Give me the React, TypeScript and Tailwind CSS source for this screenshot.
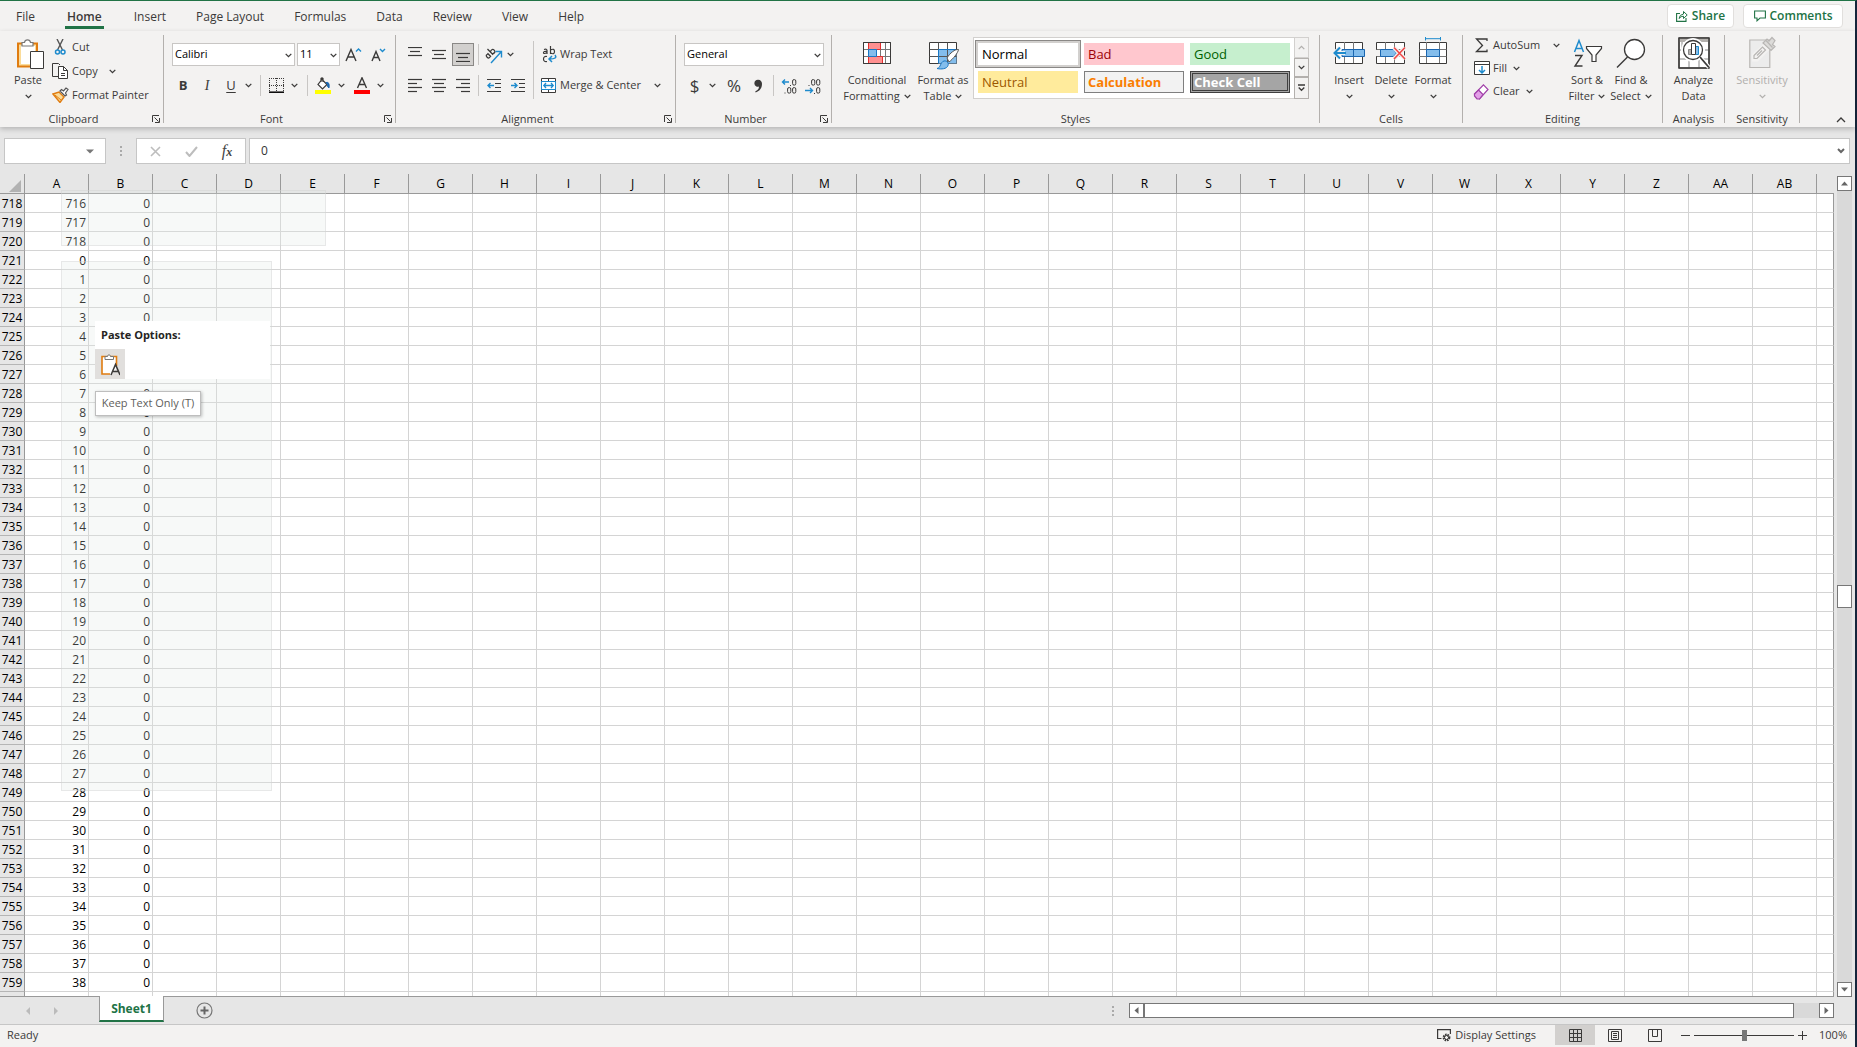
import type { ReactNode } from 'react'
import clsx from 'clsx'

const tabs = ['File', 'Home', 'Insert', 'Page Layout', 'Formulas', 'Data', 'Review', 'View', 'Help']

const columns = [...'ABCDEFGHIJKLMNOPQRSTUVWXYZ', 'AA', 'AB']

const rows = Array.from({ length: 42 }, (_, i) => {
   const row = 718 + i
   return { row, a: row < 721 ? row - 2 : row - 721, b: 0 }
})

const INK = '#3b3a39'
const BLUE = '#1e8bcd'

function Svg({ w, h, children, className }: { w: number; h: number; children: ReactNode; className?: string }) {
   return (
      <svg
         width={w}
         height={h}
         viewBox={`0 0 ${w} ${h}`}
         fill="none"
         stroke={INK}
         aria-hidden="true"
         className={clsx('shrink-0', className)}
      >
         {children}
      </svg>
   )
}

function Chevron({ color = INK, className }: { color?: string; className?: string }) {
   return (
      <Svg w={7} h={5} className={className}>
         <path d="M.7 .9 3.5 3.7 6.3 .9" stroke={color} strokeWidth="1.3" />
      </Svg>
   )
}

function Divider({ className }: { className?: string }) {
   return <div className={clsx('w-px shrink-0 bg-[#c8c6c4]', className)} />
}

function Group({
   label,
   width,
   launcher,
   children,
}: {
   label: string
   width: string
   launcher?: boolean
   children: ReactNode
}) {
   return (
      <>
         <section aria-label={label} className={clsx('flex shrink-0 flex-col', width)}>
            <div className="flex h-20 items-start">{children}</div>
            <div className={clsx('relative h-4 text-center leading-4', launcher && 'pr-4')}>
               {label}
               {launcher && (
                  <button aria-label={`${label} settings`} className="absolute right-[3px] top-1">
                     <Svg w={8} h={8}>
                        <path d="M.5 7V.5H7M2.5 2.5 6.5 6.5M7.5 3V7.5H3" />
                     </Svg>
                  </button>
               )}
            </div>
         </section>
         <div className="my-1 w-px shrink-0 bg-[#b3b0ad]" />
      </>
   )
}

function BigButton({
   icon,
   lines,
   width,
   arrow = true,
   disabled,
}: {
   icon: ReactNode
   lines: string[]
   width: string
   arrow?: boolean
   disabled?: boolean
}) {
   return (
      <button
         disabled={disabled}
         className={clsx('mt-1 flex shrink-0 flex-col items-center leading-4', width, disabled && 'text-[#b1afad]')}
      >
         {icon}
         <span className="whitespace-nowrap">{lines[0]}</span>
         <span className="flex h-4 items-center gap-1 whitespace-nowrap">
            {lines[1]}
            {arrow && <Chevron color={disabled ? '#b1afad' : INK} />}
         </span>
      </button>
   )
}

function SmallButton({ icon, label, arrow, arrowGap = 'ml-1' }: {
   icon: ReactNode
   label: string
   arrow?: boolean
   arrowGap?: string
}) {
   return (
      <button className="flex h-full items-center gap-[2px] whitespace-nowrap">
         {icon}
         {label}
         {arrow && <Chevron className={arrowGap} />}
      </button>
   )
}

function Tool({ label, width = 'w-[22px]', active, children }: {
   label: string
   width?: string
   active?: boolean
   children: ReactNode
}) {
   return (
      <button
         aria-label={label}
         className={clsx(
            'flex h-[23px] shrink-0 items-center justify-center',
            width,
            active && 'border border-[#8a8886] bg-[#d2d0ce]',
         )}
      >
         {children}
      </button>
   )
}

function Combo({ label, value, width }: { label: string; value: string; width: string }) {
   return (
      <div className={clsx('relative h-[23px]', width)}>
         <select
            aria-label={label}
            className="h-full w-full appearance-none border border-[#c8c6c4] bg-white px-[2px] text-[11px] text-black"
         >
            <option>{value}</option>
         </select>
         <Chevron className="pointer-events-none absolute right-[3px] top-[10px]" />
      </div>
   )
}

function Lines({ y, x1, x2 }: { y: number[]; x1: number[]; x2: number[] }) {
   return (
      <Svg w={14} h={15}>
         {y.map((v, i) => (
            <path key={v} d={`M${x1[i]} ${v}.5H${x2[i]}`} strokeWidth="1.2" />
         ))}
      </Svg>
   )
}

/* ---- large ribbon icons, all 37px high ---- */

const pasteIcon = (
   <Svg w={36} h={37}>
      <path d="M8 8.5h19v23H8z" fill="#fbdc9a" stroke="#e07c10" strokeWidth="2" />
      <path d="M11 11h14v18H11z" fill="#fff" stroke="none" />
      <path d="M12 11V7.5h2.5C15 4 20 4 20.500 7.500H23V11z" fill="#fff" stroke="#777" strokeWidth="1.2" />
      <path d="M20.500 16.500h13v17h-13z" fill="#fff" stroke={INK} />
   </Svg>
)

function TableLines() {
   return (
      <>
         <path d="M.5 .5h27v21H.500z" fill="#fff" />
         <path d="M.5 7.500h27M.5 14.500h27M5.500 0v21M17.500 0v21M22.500 0v21" stroke="#777" />
      </>
   )
}

const conditionalIcon = (
   <Svg w={28} h={37}>
      <g transform="translate(0 7)">
         <TableLines />
         <path d="M5.500 .5h12v7h-12zM5.500 14.500h14v7h-14z" fill="#ff9090" stroke="#e03030" />
         <path d="M5.500 7.500h8v7h-8z" fill="#83bdec" stroke="#1a77c4" />
         <path d="M.5 .5h27v21H.500z" />
      </g>
   </Svg>
)

const formatTableIcon = (
   <Svg w={30} h={37} className="ml-[2px]">
      <path d="M.5 7.500h27v21H.500z" fill="#fff" />
      <path d="M9.500 14.500h18v14h-18z" fill="#83bdec" stroke="none" />
      <path d="M.5 14.500h27M.5 21.500h27M9.500 7.500v21M18.500 7.500v21" stroke="#555" />
      <path d="M9.500 28.500v-14h18" stroke="#1a77c4" />
      <path d="M18 23C21 18 26 14 29.500 14.500 29 18 24 24 20 27z" fill="#fff" stroke="#555" />
      <path d="M8 33.500C12 33 11 27 15 26c3-.6 5 2 4 4.500-1 3.500-7 4-11 3z" fill="#83bdec" stroke="#1a77c4" />
   </Svg>
)

const insertIcon = (
   <Svg w={34} h={37}>
      <path d="M3.500 7.500h27v21h-27z" fill="#fff" />
      <path d="M12.500 7v21M21.500 7v21" stroke="#777" />
      <path d="M10 14.500h22.500v7H10z" fill="#83bdec" stroke="#1a66b0" />
      <path d="M21.500 15v6" stroke="#1a66b0" />
      <path d="M13 18H3M8 12.500 2.500 18 8 23.500" stroke="#f3f2f1" strokeWidth="4" />
      <path d="M14 18H2.500M8 12.500 2.500 18 8 23.500" stroke={BLUE} strokeWidth="2" />
   </Svg>
)

const deleteIcon = (
   <Svg w={32} h={37}>
      <path d="M1.500 7.500h28v21h-28z" fill="#fff" />
      <path d="M10.500 7v21M19.500 7v21M1.500 14.500h28M1.500 21.500h28" stroke="#777" />
      <path d="M1 15h5v6H1z" fill="#f3f2f1" stroke="none" />
      <path d="M5.500 14.500h13l3 3.500-3 3.500h-13z" fill="#83bdec" stroke="#1a66b0" />
      <path d="M19 12.500 30 24M30 12.500 19 24" stroke="#f3f2f1" strokeWidth="4" />
      <path d="M19 12.500 30 24M30 12.500 19 24" stroke="#f04848" strokeWidth="1.600" />
   </Svg>
)

const formatIcon = (
   <Svg w={28} h={37}>
      <path d="M.5 7.500h27v21H.500z" fill="#fff" />
      <path d="M7.500 7v21M20.500 7v21M.5 14.500h27M.5 21.500h27" stroke="#777" />
      <path d="M7.500 14.500h13v7h-13z" fill="#83bdec" stroke="#1a66b0" />
      <path d="M6.500 2v3.500M21.500 2v3.500M7 3.700h14" stroke={BLUE} />
   </Svg>
)

const sortIcon = (
   <Svg w={30} h={37} className="-mr-[2px]">
      <path d="M1.500 17 6 5.500 10.500 17M3 13.500h6" stroke={BLUE} strokeWidth="1.500" />
      <path d="M2 20.500h7L2 31h7.500" strokeWidth="1.400" />
      <path d="M13.500 11.500h15v2l-5.500 6.500v6.500h-4V20l-5.500-6.500z" fill="#fff" strokeWidth="1.200" />
   </Svg>
)

const findIcon = (
   <Svg w={30} h={37}>
      <circle cx="18.500" cy="14.500" r="10" fill="#fff" strokeWidth="1.300" />
      <path d="M11.500 22 1 32.500" strokeWidth="1.500" />
   </Svg>
)

const analyzeIcon = (
   <Svg w={32} h={37}>
      <path d="M1 3h30v30H1z" fill="#fff" />
      <path d="M1 3h30v4H1z" fill="#b3b0ad" stroke="none" />
      <path d="M1 15h30M1 24h30M11 24v9M21 24v9M4 7v8" stroke="#888" />
      <path d="M1 3h30v30H1z" strokeWidth="1.500" />
      <circle cx="15" cy="15" r="11.500" fill="#fff" stroke="#fff" />
      <circle cx="15" cy="15" r="9.500" fill="#fff" strokeWidth="1.300" />
      <path d="M22 22 31 32.500" stroke="#fff" strokeWidth="4" />
      <path d="M22 22 31 32.500" strokeWidth="1.800" />
      <path d="M10.500 14.500h3v5h-3z" fill="#b3b0ad" stroke="#888" />
      <path d="M17.500 11.500h3v8h-3z" fill="#83bdec" stroke={BLUE} />
      <path d="M13.500 8.500h4v11h-4z" fill="#fff" />
   </Svg>
)

const sensitivityIcon = (
   <Svg w={28} h={37} className="ml-[2px]">
      <g stroke="#b8b6b4" strokeWidth="1.200">
         <path d="M.8 5h20v27.500H.8z" fill="#ececec" />
         <path d="M5 20 15.500 11l3 3L8 24.500H5z" fill="#f3f2f1" stroke="#f3f2f1" strokeWidth="4" />
         <path d="M5 20.500 13.500 12l3 3L8 23.500H5z" fill="#f3f2f1" />
         <path d="M8 20.500 13 15.500" />
         <path d="m14 8 4-4 2 2 3-3.500 3 3-2.500 4 2.500 2-4 4z" fill="#dcdbd9" />
         <path d="m17 5.500 6.500 7" />
      </g>
   </Svg>
)

/* ---- style gallery ---- */

const styles = [
   { name: 'Normal', look: 'bg-white text-black outline outline-offset-2 outline-[#8a8886] ring-2 ring-[#d2d0ce]' },
   { name: 'Bad', look: 'bg-[#ffc7ce] text-[#9c0006]' },
   { name: 'Good', look: 'bg-[#c6efce] text-[#006100]' },
   { name: 'Neutral', look: 'bg-[#ffeb9c] text-[#9c5700]' },
   { name: 'Calculation', look: 'bg-[#f2f2f2] font-bold text-[#fa7d00] border border-[#7f7f7f]' },
   { name: 'Check Cell', look: 'bg-[#a5a5a5] font-bold text-white border-[3px] border-double border-[#3f3f3f]' },
]

function Ribbon() {
   return (
      <div className="relative z-10 flex h-24 shrink-0 bg-[#f3f2f1] shadow-[0_2px_5px_rgba(0,0,0,0.22)]">
         <Group label="Clipboard" width="w-[163px]" launcher>
            <BigButton icon={pasteIcon} lines={['Paste', '']} width="ml-[10px] w-9" />
            <div className="ml-[6px] mt-1 grid auto-rows-[24px]">
               <SmallButton
                  label="Cut"
                  icon={
                     <Svg w={18} h={16}>
                        <path d="M5 0 10.500 11M11 0 5.500 11" stroke="#555" strokeWidth="1.400" />
                        <circle cx="5.500" cy="13" r="2" stroke={BLUE} strokeWidth="1.500" />
                        <circle cx="11" cy="13" r="2" stroke={BLUE} strokeWidth="1.500" />
                     </Svg>
                  }
               />
               <SmallButton
                  label="Copy"
                  arrow
                  arrowGap="ml-[9px]"
                  icon={
                     <Svg w={18} h={16}>
                        <path d="M6 13.500H.500V.500h6L8 2" />
                        <path d="M6.500 3.500h5l4 4v8h-9z" fill="#fff" />
                        <path d="M11.500 3.500v4h4M9 10.500h4M9 12.500h4" />
                     </Svg>
                  }
               />
               <SmallButton
                  label="Format Painter"
                  icon={
                     <Svg w={18} h={16}>
                        <path d="M1 7 7 5l5 5-4 5.500z" fill="#fbdc9a" stroke="#e07c10" strokeWidth="1.400" />
                        <path d="m3 8 6 5" stroke="#e07c10" />
                        <path d="m8 4 1.500-1.500 2 1.500L14 1l2 1.500L13.500 6l1 2L13 9z" fill="#fff" stroke="#555" strokeWidth="1.200" />
                     </Svg>
                  }
               />
            </div>
         </Group>

         <Group label="Font" width="w-[231px]" launcher>
            <div className="pl-2 pt-3">
               <div className="flex gap-[2px]">
                  <Combo label="Font" value="Calibri" width="w-[123px]" />
                  <Combo label="Font size" value="11" width="w-[43px]" />
                  <Tool label="Increase font size">
                     <Svg w={17} h={16}>
                        <path d="M1 14 6 2.500 11 14M3 10h6.500" strokeWidth="1.400" />
                        <path d="m11 4.500 2.500-2.500L16 4.500" stroke={BLUE} strokeWidth="1.400" />
                     </Svg>
                  </Tool>
                  <Tool label="Decrease font size" width="w-6">
                     <Svg w={16} h={16}>
                        <path d="M2 14 6 4.500 10 14M3.500 10.500h5.500" strokeWidth="1.400" />
                        <path d="m10 2 2.500 2.500L15 2" stroke={BLUE} strokeWidth="1.400" />
                     </Svg>
                  </Tool>
               </div>
               <div className="mt-2 flex items-center text-[13px]">
                  <Tool label="Bold">
                     <b>B</b>
                  </Tool>
                  <Tool label="Italic" width="w-[26px]">
                     <i className="font-['Liberation_Serif',serif] text-[14px]">I</i>
                  </Tool>
                  <Tool label="Underline">
                     <span className="underline underline-offset-2">U</span>
                  </Tool>
                  <Tool label="Underline style" width="w-3">
                     <Chevron />
                  </Tool>
                  <Divider className="mx-[6px] h-[21px]" />
                  <Tool label="Borders" width="w-[19px]">
                     <Svg w={15} h={15}>
                        <path d="M.5 0v14M14.500 0v14M7.500 0v14M0 .5h15M0 7.500h15" strokeDasharray="1 1" />
                        <path d="M0 14.200h15" stroke="#000" strokeWidth="1.500" />
                     </Svg>
                  </Tool>
                  <Tool label="Border styles" width="w-[17px]">
                     <Chevron />
                  </Tool>
                  <Divider className="mx-1 h-[21px]" />
                  <Tool label="Fill color">
                     <Svg w={16} h={17}>
                        <path d="M7 2.500 12 7.500 7.500 12 3 7.500zM6 5V1.500q1-1 2 0V5" fill="#fff" strokeWidth="1.200" />
                        <path d="M11 5.500q4-1 3 5.500-2-1-1.500-3.500z" fill="#1a66b0" stroke="#1a66b0" />
                        <path d="M0 13h16v4H0z" fill="#ff0" stroke="none" />
                     </Svg>
                  </Tool>
                  <Tool label="Fill colors" width="w-[14px]">
                     <Chevron />
                  </Tool>
                  <Tool label="Font color" width="w-7">
                     <Svg w={16} h={17}>
                        <path d="M3.500 11 8 .8 12.500 11M5 7.500h6" strokeWidth="1.400" />
                        <path d="M0 13h16v4H0z" fill="#f00" stroke="none" />
                     </Svg>
                  </Tool>
                  <Tool label="Font colors" width="w-2">
                     <Chevron />
                  </Tool>
               </div>
            </div>
         </Group>

         <Group label="Alignment" width="w-[279px]" launcher>
            <div className="pl-2 pt-3">
               <div className="flex items-center gap-[2px]">
                  <Tool label="Top align">
                     <Lines y={[0, 4, 8]} x1={[0, 2, 0]} x2={[14, 12, 14]} />
                  </Tool>
                  <Tool label="Middle align">
                     <Lines y={[3, 7, 11]} x1={[0, 2, 0]} x2={[14, 12, 14]} />
                  </Tool>
                  <Tool label="Bottom align" active>
                     <Lines y={[6, 10, 14]} x1={[0, 2, 0]} x2={[14, 12, 14]} />
                  </Tool>
                  <Divider className="mx-[2px] h-[21px]" />
                  <Tool label="Orientation">
                     <Svg w={18} h={18}>
                        <g strokeWidth="1.300" transform="rotate(-45 6 8)">
                           <path d="M4 5v5M4 6q-3-1.500-3 1.500T4 9M7 2v8M7 6q4-1.500 4 1.500T7 9" />
                        </g>
                        <path d="M6 17 16 6M10.500 5.500H16.500V11.500" stroke={BLUE} strokeWidth="1.400" />
                     </Svg>
                  </Tool>
                  <Chevron />
               </div>
               <div className="mt-2 flex items-center gap-[2px]">
                  <Tool label="Align left">
                     <Lines y={[1, 5, 9, 13]} x1={[0, 0, 0, 0]} x2={[14, 9, 14, 9]} />
                  </Tool>
                  <Tool label="Center">
                     <Lines y={[1, 5, 9, 13]} x1={[0, 2, 0, 2]} x2={[14, 12, 14, 12]} />
                  </Tool>
                  <Tool label="Align right">
                     <Lines y={[1, 5, 9, 13]} x1={[0, 5, 0, 5]} x2={[14, 14, 14, 14]} />
                  </Tool>
                  <Divider className="mx-[2px] h-[21px]" />
                  <Tool label="Decrease indent">
                     <Svg w={14} h={15}>
                        <path d="M0 1.500h14M8 5.500h6M8 9.500h6M0 13.500h14" strokeWidth="1.200" />
                        <path d="M7 7.500H1M3.500 5 1 7.500 3.500 10" stroke={BLUE} strokeWidth="1.400" />
                     </Svg>
                  </Tool>
                  <Tool label="Increase indent">
                     <Svg w={14} h={15}>
                        <path d="M0 1.500h14M8 5.500h6M8 9.500h6M0 13.500h14" strokeWidth="1.200" />
                        <path d="M0 7.500h6M3.500 5 6 7.500 3.500 10" stroke={BLUE} strokeWidth="1.400" />
                     </Svg>
                  </Tool>
               </div>
            </div>
            <Divider className="ml-1 mr-[6px] mt-[10px] h-[58px]" />
            <div className="mt-3 grid auto-rows-[23px] gap-2">
               <SmallButton
                  label="Wrap Text"
                  icon={
                     <Svg w={18} h={17}>
                        <path
                           d="M4 3.500q3-1 3 1V8M7 5.500Q3.500 5 3.500 6.700T7 6.500M10.500 0v8M10.500 4q4-2 4 1.500t-4 1.500M7 10.500q-3.500-.5-3.500 2.500T7 15.500"
                           strokeWidth="1.200"
                        />
                        <path d="M15 9q3 4-5.500 4M12 10 9 13l3 3" stroke={BLUE} strokeWidth="1.500" />
                     </Svg>
                  }
               />
               <SmallButton
                  label="Merge & Center"
                  arrow
                  arrowGap="ml-[11px]"
                  icon={
                     <Svg w={18} h={15}>
                        <path d="M1.500 .5h14v14h-14z" fill="#fff" />
                        <path d="M8.500 0v15" />
                        <path d="M1.500 3.500h14v8h-14z" fill="#fff" stroke={BLUE} />
                        <path d="M4 7.500h9M6 5 3.800 7.500 6 10M11 5l2.200 2.500L11 10" stroke={BLUE} strokeWidth="1.300" />
                     </Svg>
                  }
               />
            </div>
         </Group>

         <Group label="Number" width="w-[155px]" launcher>
            <div className="pl-2 pt-3">
               <Combo label="Number format" value="General" width="w-[140px]" />
               <div className="mt-2 flex items-center text-[17px]">
                  <Tool label="Accounting format" width="w-[21px]">
                     $
                  </Tool>
                  <Tool label="Currencies" width="w-[15px]">
                     <Chevron />
                  </Tool>
                  <Tool label="Percent style" width="w-7">
                     %
                  </Tool>
                  <Tool label="Comma style" width="w-5">
                     <Svg w={9} h={14}>
                        <path
                           d="M4.200 .8a3.500 3.500 0 1 0 .8 6.800C5 10 3.500 11.500 1.200 12.500l.5 1C6 12 8 9 8 4.800 8 2.500 6.500 .8 4.200 .8z"
                           fill={INK}
                           stroke="none"
                        />
                     </Svg>
                  </Tool>
                  <Divider className="ml-[5px] mr-1 h-[21px]" />
                  <Tool label="Increase decimal">
                     <Svg w={16} h={16}>
                        <path d="M8 4H1.500M4 1.500 1.500 4 4 6.500" stroke={BLUE} strokeWidth="1.400" />
                        <rect x="11.600" y="1.600" width="3.200" height="5.500" rx="1.400" />
                        <rect x="6.600" y="9.600" width="3.200" height="5.500" rx="1.400" />
                        <rect x="11.600" y="9.600" width="3.200" height="5.500" rx="1.400" />
                        <path d="M9 7.500h1M3.500 15h1" />
                     </Svg>
                  </Tool>
                  <Tool label="Decrease decimal" width="w-[26px]">
                     <Svg w={16} h={16}>
                        <path d="M0 12.500h7.500M5 10l2.500 2.500L5 15" stroke={BLUE} strokeWidth="1.400" />
                        <rect x="6.600" y="1.600" width="3.200" height="5.500" rx="1.400" />
                        <rect x="11.600" y="1.600" width="3.200" height="5.500" rx="1.400" />
                        <rect x="11.600" y="9.600" width="3.200" height="5.500" rx="1.400" />
                        <path d="M3.500 7.500h1M9 15.500h1" />
                     </Svg>
                  </Tool>
               </div>
            </div>
         </Group>

         <Group label="Styles" width="w-[487px]">
            <BigButton icon={conditionalIcon} lines={['Conditional', 'Formatting']} width="ml-2 w-[74px]" />
            <BigButton icon={formatTableIcon} lines={['Format as', 'Table']} width="w-[58px]" />
            <div className="ml-px mt-[6px] flex h-[62px] border border-[#d2d0ce] bg-white">
               <div className="grid w-80 grid-cols-[repeat(3,100px)] content-start gap-[6px] px-1 pt-[5px] text-[13px]">
                  {styles.map(({ name, look }) => (
                     <button key={name} className={clsx('flex h-[22px] items-center text-left', look)}>
                        <span className={clsx('leading-4', name === 'Calculation' ? 'pl-[3px]' : name === 'Check Cell' ? 'pl-px' : 'pl-1')}>
                           {name}
                        </span>
                     </button>
                  ))}
               </div>
               <div className="-my-px -mr-px grid w-[15px] grid-rows-[21px_19px_22px] *:flex *:items-center *:justify-center *:border *:bg-[#f3f2f1]">
                  <button aria-label="Previous styles" className="border-[#d2d0ce]">
                     <Chevron color="#b1afad" className="rotate-180" />
                  </button>
                  <button aria-label="Next styles" className="border-[#b3b0ad]">
                     <Chevron />
                  </button>
                  <button aria-label="More styles" className="border-[#b3b0ad]">
                     <Svg w={7} h={8}>
                        <path d="M0 1h7M.700 3.500l2.800 2.800 2.800-2.800" strokeWidth="1.300" />
                     </Svg>
                  </button>
               </div>
            </div>
         </Group>

         <Group label="Cells" width="w-[142px]">
            <div className="flex pl-2">
               <BigButton icon={insertIcon} lines={['Insert', '']} width="w-[42px]" />
               <BigButton icon={deleteIcon} lines={['Delete', '']} width="w-[42px]" />
               <BigButton icon={formatIcon} lines={['Format', '']} width="w-[42px]" />
            </div>
         </Group>

         <Group label="Editing" width="w-[199px]">
            <div className="ml-[10px] mt-[3px] grid w-[92px] auto-rows-[23px]">
               <SmallButton
                  label="AutoSum"
                  arrow
                  arrowGap="ml-[11px]"
                  icon={
                     <Svg w={18} h={15}>
                        <path d="M14 3V1H3.500l6 6.500-6 6H14v-2" strokeWidth="1.300" />
                     </Svg>
                  }
               />
               <SmallButton
                  label="Fill"
                  arrow
                  icon={
                     <Svg w={18} h={15}>
                        <path d="M1.500 .5h15v13h-15zM1.500 3.500h15" fill="#fff" />
                        <path d="M9 5v7M6 9l3 3 3-3" stroke={BLUE} strokeWidth="1.500" />
                     </Svg>
                  }
               />
               <SmallButton
                  label="Clear"
                  arrow
                  icon={
                     <Svg w={18} h={16}>
                        <path d="M10.500 .8 15 5.500 6.500 15 1.500 10z" fill="#fff" stroke="#a040a8" strokeWidth="1.200" />
                        <path d="M5.500 6 10 10.500 6.500 15H4L1.500 12v-2z" fill="#e3a0e8" stroke="#a040a8" strokeWidth="1.200" />
                     </Svg>
                  }
               />
            </div>
            <BigButton icon={sortIcon} lines={['Sort &', 'Filter']} width="w-11" />
            <BigButton icon={findIcon} lines={['Find &', 'Select']} width="w-11" />
         </Group>

         <Group label="Analysis" width="w-[61px]">
            <BigButton icon={analyzeIcon} lines={['Analyze', 'Data']} width="w-full" arrow={false} />
         </Group>

         <Group label="Sensitivity" width="w-[74px]">
            <BigButton icon={sensitivityIcon} lines={['Sensitivity', '']} width="w-full" disabled />
         </Group>

         <div className="flex flex-1 items-end justify-end pb-1 pr-[9px]">
            <button aria-label="Collapse the ribbon">
               <Svg w={10} h={6}>
                  <path d="m1 5 4-4 4 4" strokeWidth="1.300" />
               </Svg>
            </button>
         </div>
      </div>
   )
}

function FormulaBar() {
   return (
      <div className="flex h-[47px] shrink-0 items-start pl-1 pr-[5px] pt-[11px]">
         <div className="flex h-[26px] w-[102px] items-center border border-[#c6c6c6] bg-white">
            <input aria-label="Name box" className="min-w-0 flex-1 outline-none" />
            <button aria-label="Names" className="mr-[11px]">
               <Svg w={8} h={5}>
                  <path d="M0 .5h8L4 4.500z" fill="#777" stroke="none" />
               </Svg>
            </button>
         </div>
         <Svg w={30} h={26}>
            <path d="M15 8v2M15 12v2M15 16v2" stroke="#aaa" strokeWidth="2" />
         </Svg>
         <div className="flex h-[26px] w-[110px] items-center border border-[#c6c6c6] bg-white *:flex *:flex-1 *:items-baseline *:justify-center">
            <button aria-label="Cancel">
               <Svg w={11} h={11}>
                  <path d="m1 1 9 9M10 1l-9 9" stroke="#bdbdbd" strokeWidth="1.600" />
               </Svg>
            </button>
            <button aria-label="Enter">
               <Svg w={13} h={11}>
                  <path d="m1 6 3.500 4L12 1" stroke="#bdbdbd" strokeWidth="2" />
               </Svg>
            </button>
            <button
               aria-label="Insert function"
               className="font-['Liberation_Serif',serif] text-base italic leading-5 text-[#444]"
            >
               f<span className="text-xs font-bold">x</span>
            </button>
         </div>
         <div className="ml-[3px] flex h-[26px] flex-1 items-center border border-[#c6c6c6] bg-white pl-[11px] pr-1">
            <input aria-label="Formula" defaultValue="0" className="min-w-0 flex-1 text-xs text-[#333] outline-none" />
            <button aria-label="Expand formula bar">
               <Svg w={8} h={6}>
                  <path d="m1 1 3 3 3-3" stroke="#666" strokeWidth="2" />
               </Svg>
            </button>
         </div>
      </div>
   )
}

function Grid() {
   return (
      <table className="w-full table-fixed border-separate border-spacing-0 text-xs text-black">
         <colgroup>
            <col className="w-[25px]" />
            {columns.map(c => (
               <col key={c} className="w-16" />
            ))}
            <col />
         </colgroup>
         <thead>
            <tr className="*:h-5 *:border-b *:border-[#999] *:p-0">
               <td className="border-r border-r-[#b5b5b5]">
                  <Svg w={12} h={12} className="ml-[9px] mt-1">
                     <path d="M12 0v12H0z" fill="#b2b2b2" stroke="none" />
                  </Svg>
               </td>
               {columns.map(c => (
                  <th key={c} scope="col" className="border-r border-r-[#b5b5b5] font-normal leading-[19px]">
                     {c}
                  </th>
               ))}
               <td />
            </tr>
         </thead>
         <tbody className="bg-white">
            {rows.map(({ row, a, b }) => (
               <tr
                  key={row}
                  className="*:h-[19px] *:border-b *:border-r *:border-[#d4d4d4] *:px-0 *:pb-0 *:pt-[2px] *:leading-4"
               >
                  <th scope="row" className="border-b-[#b5b5b5]! border-r-[#999]! bg-[#e6e6e6] text-center font-normal">
                     {row}
                  </th>
                  <td className="pr-[2px]! text-right">{a}</td>
                  <td className="pr-[2px]! text-right">{b}</td>
                  {columns.slice(2).map(c => (
                     <td key={c} />
                  ))}
                  <td className="border-r-[#999]!" />
               </tr>
            ))}
            <tr className="*:h-[19px] *:border-r *:border-[#d4d4d4]">
               <th className="border-r-[#999]! bg-[#e6e6e6]" />
               {columns.map(c => (
                  <td key={c} />
               ))}
               <td className="border-r-[#999]!" />
            </tr>
         </tbody>
      </table>
   )
}

function Arrow({ d }: { d: string }) {
   return (
      <Svg w={7} h={7}>
         <path d={d} fill="#666" stroke="none" />
      </Svg>
   )
}

const scrollButton = 'flex size-[15px] shrink-0 items-center justify-center border border-[#777] bg-white'

function PasteOptions() {
   return (
      <>
         <div className="absolute left-[95px] top-[147px] h-[58px] w-[175px] bg-white">
            <div className="h-7 pl-[6px] text-[11px] font-bold leading-7 text-[#252423]">Paste Options:</div>
            <button aria-label="Keep Text Only" className="flex size-[30px] items-center justify-center bg-[#e1dfdd]">
               <Svg w={20} h={24}>
                  <path d="M2 4.500h14.500v12L12 22H2z" fill="#fff" stroke="none" />
                  <path d="M10 22H2V4.500h14.500V14" stroke="#e07c10" strokeWidth="1.600" />
                  <path d="M5 7.500v-3h2.500q1.500-4 3 0H13.500v3z" fill="#fff" stroke="#777" />
                  <path d="M11 23 15.500 12.500 20 23M12.500 19.500h6" strokeWidth="1.500" />
               </Svg>
            </button>
         </div>
         <div
            role="tooltip"
            className="absolute left-[95px] top-[217px] flex h-[25px] w-[106px] items-center justify-center whitespace-nowrap border border-[#bebebe] bg-white text-[11px] text-[#605e5c] shadow-[1px_1px_3px_rgba(0,0,0,0.25)]"
         >
            Keep Text Only (T)
         </div>
      </>
   )
}

export default function App() {
   return (
      <div className="flex h-screen flex-col border-r-2 border-t border-r-[#15263c] border-t-[#217346] bg-[#e6e6e6] font-['Open_Sans','Noto_Sans',sans-serif] text-[11px] text-[#3b3a39]">
         <header className="flex h-[30px] shrink-0 items-start justify-between bg-[#f3f2f1] pr-3">
            <nav className="flex pl-px text-xs">
               {tabs.map(tab => (
                  <button key={tab} className="px-[15px] pt-1">
                     <span
                        className={clsx(
                           'block h-6 leading-[23px]',
                           tab === 'Home' && 'border-b-[3px] border-[#217346] px-[2px] font-semibold',
                        )}
                     >
                        {tab}
                     </span>
                  </button>
               ))}
            </nav>
            <div className="mt-[3px] flex gap-[9px] text-xs font-semibold text-[#217346] *:flex *:h-6 *:items-center *:justify-center *:gap-1 *:rounded-sm *:border *:border-[#e1dfdd] *:bg-white">
               <button className="w-[67px]">
                  <Svg w={12} h={12}>
                     <path d="M4 3.500H.600V11.400H10V8" stroke="#217346" strokeWidth="1.100" />
                     <path d="M3 8.500q.5-4 4.500-4.500V1.500L11.200 5 7.500 8.500V6.200Q5 6 3 8.500z" stroke="#217346" />
                  </Svg>
                  Share
               </button>
               <button className="w-[100px]">
                  <Svg w={12} h={12}>
                     <path d="M.6 1h10.800v7H6L3 10.800V8H.600z" stroke="#217346" strokeWidth="1.100" />
                  </Svg>
                  Comments
               </button>
            </div>
         </header>

         <Ribbon />
         <FormulaBar />

         <main className="relative flex min-h-0 flex-1">
            <div className="min-w-0 flex-1 overflow-hidden border-b border-[#999]">
               <Grid />
            </div>
            <div className="flex w-[21px] flex-col px-[3px] pt-[2px]">
               <button aria-label="Scroll up" className={scrollButton}>
                  <Arrow d="M0 5.500h7l-3.500-4z" />
               </button>
               <div className="flex-1 bg-[#d9d9d9] pt-[394px]">
                  <div className="h-[23px] border border-[#777] bg-white" />
               </div>
               <button aria-label="Scroll down" className={scrollButton}>
                  <Arrow d="M0 1.500h7l-3.500 4z" />
               </button>
            </div>
            <div className="pointer-events-none absolute left-[61px] top-4 h-14 w-[265px] border border-[#d0d0d0]/40 bg-[#dfe7e3]/25" />
            <div className="pointer-events-none absolute left-[61px] top-[87px] h-[530px] w-[211px] border border-[#d0d0d0]/40 bg-[#dfe7e3]/25" />
            <PasteOptions />
         </main>

         <div className="flex h-7 shrink-0 border-b border-[#c6c6c6]">
            <div className="flex w-[99px] items-center gap-[22px] pl-[25px]">
               <button aria-label="Previous sheet">
                  <Svg w={6} h={8}>
                     <path d="M5 0v8L1 4z" fill="#bbb" stroke="none" />
                  </Svg>
               </button>
               <button aria-label="Next sheet">
                  <Svg w={6} h={8}>
                     <path d="M1 0v8l4-4z" fill="#bbb" stroke="none" />
                  </Svg>
               </button>
            </div>
            <button className="relative -mt-px h-[26px] w-[65px] border-x border-b-2 border-x-[#999] border-b-[#217346] bg-white pt-[2px] text-xs font-bold text-[#217346]">
               Sheet1
            </button>
            <button aria-label="New sheet" className="ml-8 self-center">
               <Svg w={17} h={17}>
                  <circle cx="8.500" cy="8.500" r="7.500" stroke="#777" strokeWidth="1.200" />
                  <path d="M8.500 4.500v8M4.500 8.500h8" stroke="#666" strokeWidth="2" />
               </Svg>
            </button>
            <div className="flex flex-1 items-center justify-end pr-[15px]">
               <Svg w={2} h={10}>
                  <path d="M1 0v2M1 4v2M1 8v2" stroke="#aaa" strokeWidth="2" />
               </Svg>
            </div>
            <div className="mr-[21px] mt-[6px] flex h-[15px] w-[38%] bg-[#d9d9d9]">
               <button aria-label="Scroll left" className={scrollButton}>
                  <Arrow d="M5.500 0v7l-4-3.500z" />
               </button>
               <div className="-ml-px mr-[25px] flex-1 border border-l-2 border-[#777] bg-white" />
               <button aria-label="Scroll right" className={scrollButton}>
                  <Arrow d="M1.500 0v7l4-3.500z" />
               </button>
            </div>
         </div>

         <footer className="flex h-[22px] shrink-0 items-center bg-[#f3f2f1] pb-[2px] pl-[7px] pr-2">
            <span className="flex-1">Ready</span>
            <button className="mr-[19px] flex items-center gap-1">
               <Svg w={14} h={13}>
                  <path d="M4.500 9.500H.600V.600H13.400V5" strokeWidth="1.200" />
                  <circle cx="9.500" cy="8.500" r="2.800" strokeWidth="2.200" strokeDasharray="1.500 .8" />
                  <circle cx="9.500" cy="8.500" r="2" />
               </Svg>
               Display Settings
            </button>
            <div className="flex *:flex *:h-5 *:w-10 *:items-center *:justify-center">
               <button aria-label="Normal view" className="bg-[#d2d0ce]">
                  <Svg w={13} h={13}>
                     <path d="M.5 .5h12v12H.500zM4.500 0v13M8.500 0v13M0 4.500h13M0 8.500h13" />
                  </Svg>
               </button>
               <button aria-label="Page layout view">
                  <Svg w={14} h={13}>
                     <path d="M.5 .5h13v12H.500zM3.500 2.500h7v8h-7zM5 4.500h4M5 6.500h4M5 8.500h4" />
                  </Svg>
               </button>
               <button aria-label="Page break view">
                  <Svg w={14} h={13}>
                     <path d="M.5 .5h13v12H.500zM4.500 0v7.500h5M9.500 0v7.500" />
                  </Svg>
               </button>
            </div>
            <button aria-label="Zoom out" className="ml-[6px]">
               <Svg w={9} h={9}>
                  <path d="M0 4.500h9" />
               </Svg>
            </button>
            <input
               type="range"
               aria-label="Zoom"
               min={0}
               max={200}
               defaultValue={100}
               className="mx-1 h-[11px] w-[100px] appearance-none bg-[linear-gradient(#3b3a39,#3b3a39)] bg-[length:100%_1px] bg-center bg-no-repeat [&::-webkit-slider-thumb]:h-[11px] [&::-webkit-slider-thumb]:w-[5px] [&::-webkit-slider-thumb]:appearance-none [&::-webkit-slider-thumb]:bg-[#777]"
            />
            <button aria-label="Zoom in">
               <Svg w={9} h={9}>
                  <path d="M0 4.500h9M4.500 0v9" />
               </Svg>
            </button>
            <span className="w-10 text-right">100%</span>
         </footer>
      </div>
   )
}
